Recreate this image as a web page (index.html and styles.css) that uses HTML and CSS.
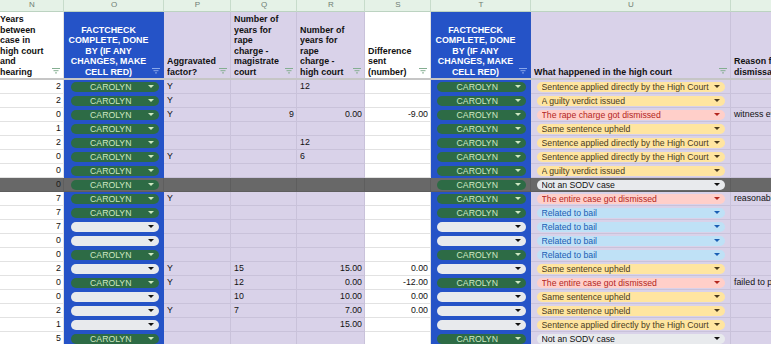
FILE: index.html
```html
<!DOCTYPE html>
<html>
<head>
<meta charset="utf-8">
<link rel="stylesheet" href="styles.css">
</head>
<body>
<div class="sheet">
  <div class="row letters">
    <div class="c first">N</div><div class="c">O</div><div class="c">P</div><div class="c">Q</div><div class="c">R</div><div class="c">S</div><div class="c">T</div><div class="c">U</div><div class="c">V</div>
  </div>
  <div class="row head">
    <div class="c w"><span class="ht">Years<br>between<br>case in<br>high court<br>and<br>hearing</span><svg class="flt" viewBox="0 0 8 6"><path d="M0 .5h8M1.5 2.7h5M3 4.9h2"/></svg></div>
    <div class="c b"><span class="ht ctr">FACTCHECK<br>COMPLETE, DONE<br>BY (IF ANY<br>CHANGES, MAKE<br>CELL RED)</span><svg class="flt" viewBox="0 0 8 6"><path d="M0 .5h8M1.5 2.7h5M3 4.9h2"/></svg></div>
    <div class="c l"><span class="ht">Aggravated<br>factor?</span><svg class="flt" viewBox="0 0 8 6"><path d="M0 .5h8M1.5 2.7h5M3 4.9h2"/></svg></div>
    <div class="c l"><span class="ht">Number of<br>years for<br>rape<br>charge -<br>magistrate<br>court</span><svg class="flt" viewBox="0 0 8 6"><path d="M0 .5h8M1.5 2.7h5M3 4.9h2"/></svg></div>
    <div class="c l"><span class="ht">Number of<br>years for<br>rape<br>charge -<br>high court</span><svg class="flt" viewBox="0 0 8 6"><path d="M0 .5h8M1.5 2.7h5M3 4.9h2"/></svg></div>
    <div class="c w"><span class="ht">Difference<br>sent<br>(number)</span><svg class="flt" viewBox="0 0 8 6"><path d="M0 .5h8M1.5 2.7h5M3 4.9h2"/></svg></div>
    <div class="c b"><span class="ht ctr">FACTCHECK<br>COMPLETE, DONE<br>BY (IF ANY<br>CHANGES, MAKE<br>CELL RED)</span><svg class="flt" viewBox="0 0 8 6"><path d="M0 .5h8M1.5 2.7h5M3 4.9h2"/></svg></div>
    <div class="c l"><span class="ht">What happened in the high court</span><svg class="flt" viewBox="0 0 8 6"><path d="M0 .5h8M1.5 2.7h5M3 4.9h2"/></svg></div>
    <div class="c l"><span class="ht">Reason for<br>dismissal</span></div>
  </div>
  <div class="freeze"></div>

  <div class="row">
    <div class="c w r">2</div><div class="c b o"><span class="chip g"><b>CAROLYN</b><i></i></span></div><div class="c l">Y</div><div class="c l"></div><div class="c l">12</div><div class="c w"></div><div class="c b t"><span class="chip g"><b>CAROLYN</b><i></i></span></div><div class="c l u"><span class="chip y"><b>Sentence applied directly by the High Court</b><i></i></span></div><div class="c l"></div>
  </div>
  <div class="row">
    <div class="c w r">2</div><div class="c b o"><span class="chip g"><b>CAROLYN</b><i></i></span></div><div class="c l">Y</div><div class="c l"></div><div class="c l"></div><div class="c w"></div><div class="c b t"><span class="chip g"><b>CAROLYN</b><i></i></span></div><div class="c l u"><span class="chip y"><b>A guilty verdict issued</b><i></i></span></div><div class="c l"></div>
  </div>
  <div class="row">
    <div class="c w r">0</div><div class="c b o"><span class="chip g"><b>CAROLYN</b><i></i></span></div><div class="c l">Y</div><div class="c l r">9</div><div class="c l r">0.00</div><div class="c w r">-9.00</div><div class="c b t"><span class="chip g"><b>CAROLYN</b><i></i></span></div><div class="c l u"><span class="chip rd"><b>The rape charge got dismissed</b><i></i></span></div><div class="c l v">witness evidence</div>
  </div>
  <div class="row">
    <div class="c w r">1</div><div class="c b o"><span class="chip g"><b>CAROLYN</b><i></i></span></div><div class="c l"></div><div class="c l"></div><div class="c l"></div><div class="c w"></div><div class="c b t"><span class="chip g"><b>CAROLYN</b><i></i></span></div><div class="c l u"><span class="chip y"><b>Same sentence upheld</b><i></i></span></div><div class="c l"></div>
  </div>
  <div class="row">
    <div class="c w r">2</div><div class="c b o"><span class="chip g"><b>CAROLYN</b><i></i></span></div><div class="c l"></div><div class="c l"></div><div class="c l">12</div><div class="c w"></div><div class="c b t"><span class="chip g"><b>CAROLYN</b><i></i></span></div><div class="c l u"><span class="chip y"><b>Sentence applied directly by the High Court</b><i></i></span></div><div class="c l"></div>
  </div>
  <div class="row">
    <div class="c w r">0</div><div class="c b o"><span class="chip g"><b>CAROLYN</b><i></i></span></div><div class="c l">Y</div><div class="c l"></div><div class="c l">6</div><div class="c w"></div><div class="c b t"><span class="chip g"><b>CAROLYN</b><i></i></span></div><div class="c l u"><span class="chip y"><b>Sentence applied directly by the High Court</b><i></i></span></div><div class="c l"></div>
  </div>
  <div class="row">
    <div class="c w r">0</div><div class="c b o"><span class="chip g"><b>CAROLYN</b><i></i></span></div><div class="c l"></div><div class="c l"></div><div class="c l"></div><div class="c w"></div><div class="c b t"><span class="chip g"><b>CAROLYN</b><i></i></span></div><div class="c l u"><span class="chip y"><b>A guilty verdict issued</b><i></i></span></div><div class="c l"></div>
  </div>
  <div class="row gray">
    <div class="c w r">0</div><div class="c b o"><span class="chip g"><b>CAROLYN</b><i></i></span></div><div class="c l"></div><div class="c l"></div><div class="c l"></div><div class="c w"></div><div class="c b t"><span class="chip g"><b>CAROLYN</b><i></i></span></div><div class="c l u"><span class="chip e"><b>Not an SODV case</b><i></i></span></div><div class="c l"></div>
  </div>
  <div class="row">
    <div class="c w r">7</div><div class="c b o"><span class="chip g"><b>CAROLYN</b><i></i></span></div><div class="c l">Y</div><div class="c l"></div><div class="c l"></div><div class="c w"></div><div class="c b t"><span class="chip g"><b>CAROLYN</b><i></i></span></div><div class="c l u"><span class="chip rd"><b>The entire case got dismissed</b><i></i></span></div><div class="c l v">reasonable doubt</div>
  </div>
  <div class="row">
    <div class="c w r">7</div><div class="c b o"><span class="chip g"><b>CAROLYN</b><i></i></span></div><div class="c l"></div><div class="c l"></div><div class="c l"></div><div class="c w"></div><div class="c b t"><span class="chip g"><b>CAROLYN</b><i></i></span></div><div class="c l u"><span class="chip bl"><b>Related to bail</b><i></i></span></div><div class="c l"></div>
  </div>
  <div class="row">
    <div class="c w r">7</div><div class="c b o"><span class="chip e"><b></b><i></i></span></div><div class="c l"></div><div class="c l"></div><div class="c l"></div><div class="c w"></div><div class="c b t"><span class="chip e"><b></b><i></i></span></div><div class="c l u"><span class="chip bl"><b>Related to bail</b><i></i></span></div><div class="c l"></div>
  </div>
  <div class="row">
    <div class="c w r">0</div><div class="c b o"><span class="chip e"><b></b><i></i></span></div><div class="c l"></div><div class="c l"></div><div class="c l"></div><div class="c w"></div><div class="c b t"><span class="chip e"><b></b><i></i></span></div><div class="c l u"><span class="chip bl"><b>Related to bail</b><i></i></span></div><div class="c l"></div>
  </div>
  <div class="row">
    <div class="c w r">0</div><div class="c b o"><span class="chip g"><b>CAROLYN</b><i></i></span></div><div class="c l"></div><div class="c l"></div><div class="c l"></div><div class="c w"></div><div class="c b t"><span class="chip g"><b>CAROLYN</b><i></i></span></div><div class="c l u"><span class="chip bl"><b>Related to bail</b><i></i></span></div><div class="c l"></div>
  </div>
  <div class="row">
    <div class="c w r">2</div><div class="c b o"><span class="chip e"><b></b><i></i></span></div><div class="c l">Y</div><div class="c l">15</div><div class="c l r">15.00</div><div class="c w r">0.00</div><div class="c b t"><span class="chip e"><b></b><i></i></span></div><div class="c l u"><span class="chip y"><b>Same sentence upheld</b><i></i></span></div><div class="c l"></div>
  </div>
  <div class="row">
    <div class="c w r">0</div><div class="c b o"><span class="chip g"><b>CAROLYN</b><i></i></span></div><div class="c l">Y</div><div class="c l">12</div><div class="c l r">0.00</div><div class="c w r">-12.00</div><div class="c b t"><span class="chip g"><b>CAROLYN</b><i></i></span></div><div class="c l u"><span class="chip rd"><b>The entire case got dismissed</b><i></i></span></div><div class="c l v">failed to prove</div>
  </div>
  <div class="row">
    <div class="c w r">0</div><div class="c b o"><span class="chip e"><b></b><i></i></span></div><div class="c l"></div><div class="c l">10</div><div class="c l r">10.00</div><div class="c w r">0.00</div><div class="c b t"><span class="chip e"><b></b><i></i></span></div><div class="c l u"><span class="chip y"><b>Same sentence upheld</b><i></i></span></div><div class="c l"></div>
  </div>
  <div class="row">
    <div class="c w r">2</div><div class="c b o"><span class="chip e"><b></b><i></i></span></div><div class="c l">Y</div><div class="c l">7</div><div class="c l r">7.00</div><div class="c w r">0.00</div><div class="c b t"><span class="chip e"><b></b><i></i></span></div><div class="c l u"><span class="chip y"><b>Same sentence upheld</b><i></i></span></div><div class="c l"></div>
  </div>
  <div class="row">
    <div class="c w r">1</div><div class="c b o"><span class="chip e"><b></b><i></i></span></div><div class="c l"></div><div class="c l"></div><div class="c l r">15.00</div><div class="c w"></div><div class="c b t"><span class="chip e"><b></b><i></i></span></div><div class="c l u"><span class="chip y"><b>Sentence applied directly by the High Court</b><i></i></span></div><div class="c l"></div>
  </div>
  <div class="row">
    <div class="c w r">5</div><div class="c b o"><span class="chip g"><b>CAROLYN</b><i></i></span></div><div class="c l"></div><div class="c l"></div><div class="c l"></div><div class="c w"></div><div class="c b t"><span class="chip g"><b>CAROLYN</b><i></i></span></div><div class="c l u"><span class="chip e"><b>Not an SODV case</b><i></i></span></div><div class="c l"></div>
  </div>
</div>
</body>
</html>
```

FILE: styles.css
```css
html, body {
  margin: 0;
  padding: 0;
  background: #fff;
}
body {
  width: 771px;
  height: 344px;
  overflow: hidden;
  font-family: "Liberation Sans", Arial, sans-serif;
  color: #111;
}
.sheet {
  margin-left: -3px;
  width: 820px;
}
.row {
  display: grid;
  grid-template-columns: 67px 100px 67px 66px 68px 66px 100px 200px 86px;
}
.c {
  box-sizing: border-box;
  height: 14px;
  border-right: 1px solid #e1e1e1;
  border-bottom: 1px solid #e1e1e1;
  font-size: 8.8px;
  line-height: 13px;
  padding: 0 2px 0 3px;
  display: flex;
  align-items: center;
  white-space: nowrap;
  overflow: hidden;
}
.c.w { background: #fff; border-color: #e2e2e2; }
.c.l { background: #d9d2e9; border-color: #c9c2da; }
.c.b { background: #2553c7; border-color: #2553c7; }
.c.r { justify-content: flex-end; }
.row.gray .c { background: #686868; border-color: #5e5e5e; color: #1a1a1a; }

/* column letters */
.letters .c {
  height: 12px;
  background: #e5f2e7;
  border-right: 1px solid #c7dccb;
  border-bottom: 1px solid #bcd3c1;
  font-size: 8px;
  line-height: 10px;
  color: #6f7d73;
  justify-content: center;
  align-items: flex-start;
}
.letters .first { padding-left: 6px; }

/* header row */
.head .c {
  height: 66px;
  border-bottom: 0;
  align-items: flex-end;
  padding: 0 3px 1px 3px;
  font-weight: bold;
  font-size: 8.9px;
  line-height: 10.5px;
  color: #111;
}
.head .c.w { border-right-color: #e2e2e2; }
.head .c.b { color: #fff; border-right-color: #2a55c3; }
.ht { flex: 1; overflow: hidden; }
.ht.ctr { text-align: center; }
.flt {
  width: 8px;
  height: 6px;
  flex: none;
  margin: 0 0 3px 2px;
  fill: none;
  stroke: #84ae91;
  stroke-width: 1;
}
.head .c.b .flt { stroke: #8aa8ea; }

.freeze {
  height: 2px;
  background: #c6c6c6;
}

/* dropdown chips */
.c.o { padding: 0 4px 0 7px; }
.c.t { padding: 0 4px 0 6px; }
.c.u { padding: 0 5px 0 6px; }
.c.v { padding-left: 3px; }
.chip {
  flex: 1;
  display: flex;
  align-items: center;
  height: 10px;
  border-radius: 5px;
  padding: 0 5px 0 4.5px;
  min-width: 0;
  font-size: 8.7px;
  line-height: 10px;
}
.chip b {
  font-weight: normal;
  flex: 1;
  overflow: hidden;
  white-space: nowrap;
}
.chip i {
  flex: none;
  width: 0;
  height: 0;
  margin-left: 2px;
  border-left: 3px solid transparent;
  border-right: 3px solid transparent;
  border-top: 3px solid currentColor;
}
.chip.g { background: #2d6b45; color: #cde8c2; }
.chip.g b { text-align: center; }
.chip.e { background: #e8eaed; color: #111; }
.chip.y { background: #ffe5a0; color: #4a3b1e; }
.chip.rd { background: #ffcfc9; color: #b3261e; }
.chip.bl { background: #bfe1f6; color: #1a5fb4; }
```
